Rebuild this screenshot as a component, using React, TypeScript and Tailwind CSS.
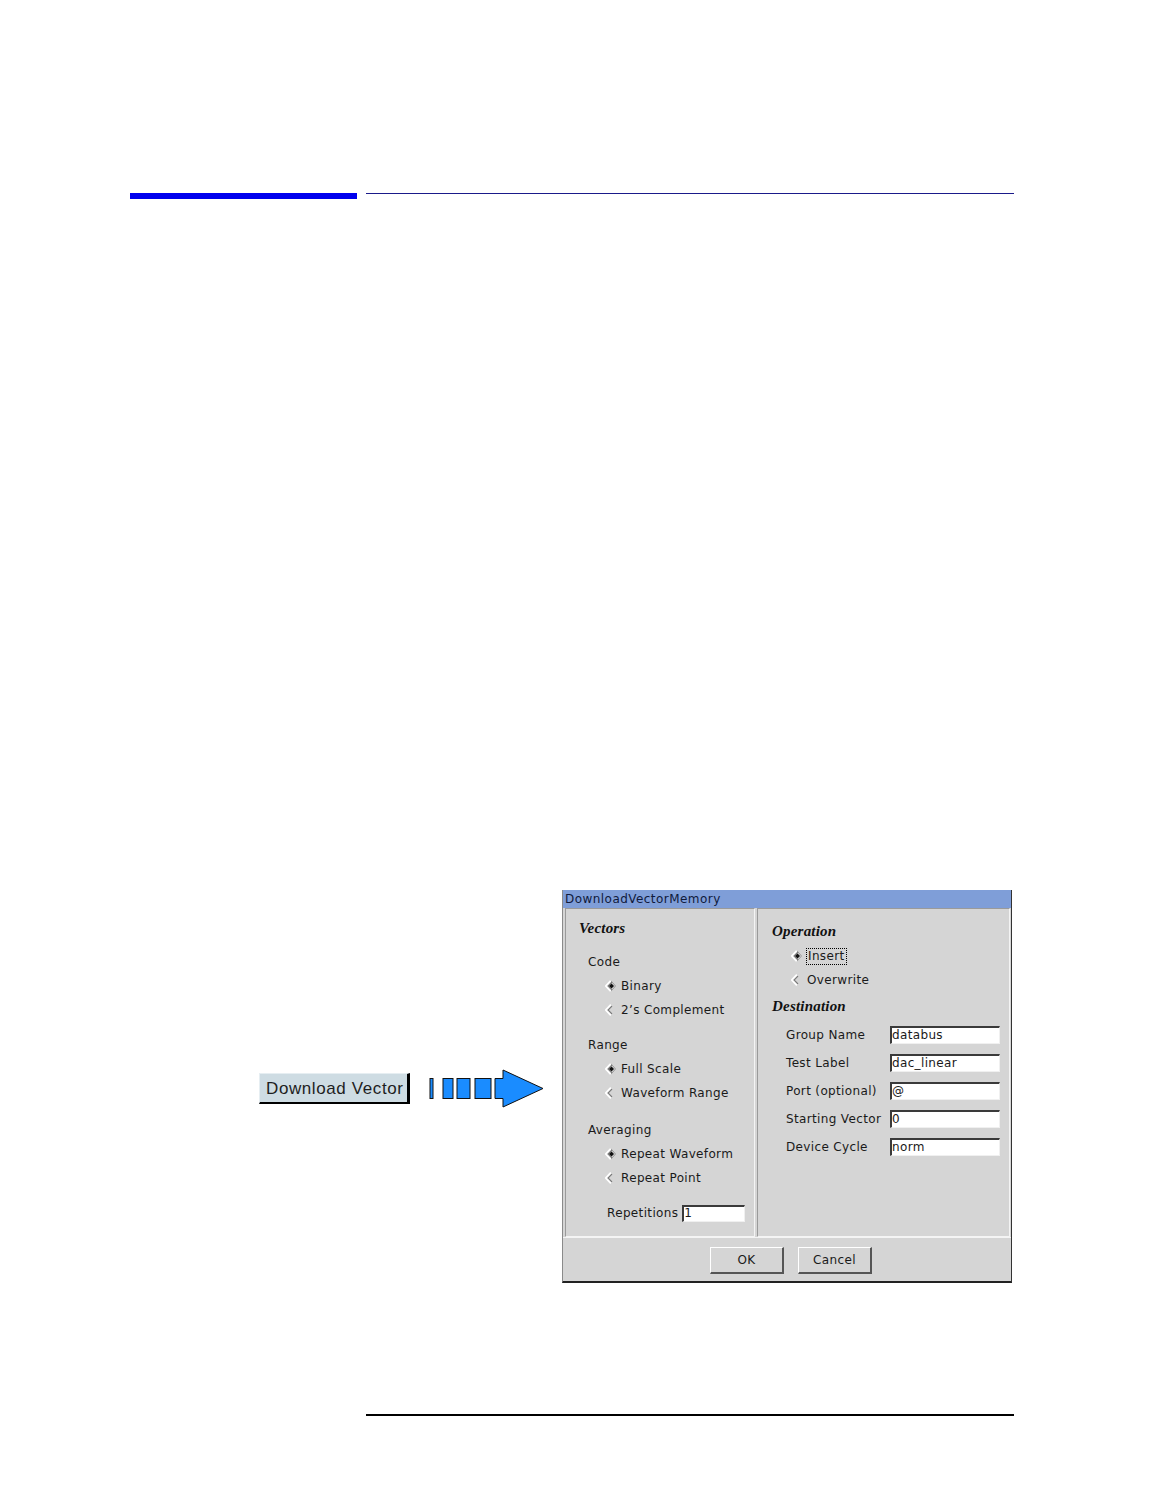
import React from 'react';

const ui = { fontFamily: '"DejaVu Sans", Verdana, sans-serif', letterSpacing: '0.35px' };
const serif = { fontFamily: '"Liberation Serif", "Times New Roman", serif', letterSpacing: '0.2px' };

const Radio = ({ on }: { on?: boolean }) => (
  <svg width="11" height="12" viewBox="0 0 11 12" className="shrink-0">
    <polyline points="6,0.8 1,6 6,11.2" fill="none" stroke="#ffffff" strokeWidth="2.2" />
    <polyline points="7,2 3,6 7,10" fill="none" stroke="#7a7a7a" strokeWidth="1.1" />
    {on && <polyline points="6,0.8 10.5,6 6,11.2" fill="none" stroke="#9a9a9a" strokeWidth="1" />}
    {on && <polygon points="6.5,3.5 9,6 6.5,8.5 4,6" fill="#111" />}
  </svg>
);

const Option = ({ label, on, focus }: { label: string; on?: boolean; focus?: boolean }) => (
  <div className="flex items-center h-[24px] gap-[5px]">
    <Radio on={on} />
    <span className={focus ? 'outline-1 outline-dotted outline-black px-[1px] leading-[15px]' : ''}>{label}</span>
  </div>
);

const Heading = ({ children }: { children: React.ReactNode }) => (
  <div className="h-[24px] leading-[24px] text-[15px] font-bold italic text-[#111]" style={serif}>
    {children}
  </div>
);

const Field = ({ label, value }: { label: string; value: string }) => (
  <div className="flex items-center h-[28px]">
    <span className="w-[104px] shrink-0">{label}</span>
    <div className="w-[110px] h-[18px] bg-white border-t-2 border-l-2 border-[#3a3a3a] leading-[15px] text-[12px] border-r border-b border-r-[#f0f0f0] border-b-[#f0f0f0]">
      {value}
    </div>
  </div>
);

const Button = ({ label }: { label: string }) => (
  <div className="w-[74px] h-[27px] flex items-center justify-center bg-[#d5d5d5] border-t border-l border-white border-r-2 border-b-2 border-r-[#555] border-b-[#555]">
    {label}
  </div>
);

export default function App() {
  return (
    <div className="w-[1164px] h-[1506px] bg-white relative overflow-hidden">
      {/* header rule */}
      <div className="flex items-start pt-[193px]">
        <div className="ml-[130px] w-[227px] h-[6px] bg-[#0000ee]" />
        <div className="ml-[9px] w-[648px] h-[1px] bg-[#1a1a8a]" />
      </div>

      {/* figure */}
      <div className="flex items-start mt-[691px] pl-[259px]">
        <div
          className="mt-[183px] w-[151px] h-[31px] bg-[#cedce3] border-r-[3px] border-b-[2px] border-black border-t border-l border-t-[#e6eef2] border-l-[#e6eef2] pl-[6px] text-[17px] leading-[29px] text-[#1e1e1e] tracking-[0.6px] whitespace-nowrap"
          style={{ fontFamily: '"Liberation Sans", Arial, sans-serif' }}
        >
          Download Vector
        </div>
        <svg width="115" height="40" viewBox="0 0 115 40" className="ml-[19px] mt-[179px]">
          <g fill="#1a8cff" stroke="#111" strokeWidth="1">
            <rect x="1" y="9.5" width="3" height="20" />
            <rect x="14" y="9.5" width="10" height="20" />
            <rect x="28" y="9.5" width="13" height="20" />
            <rect x="46" y="9.5" width="16" height="20" />
            <polygon points="66,9.5 74,9.5 74,1 114,19.5 74,38 74,29.5 66,29.5" />
          </g>
        </svg>

        {/* dialog */}
        <div
          className="ml-[18px] w-[450px] h-[393px] flex flex-col bg-[#d5d5d5] border-l border-[#8a8a8a] border-r border-r-[#333] border-b-2 border-b-[#222] text-[12px] text-[#1a1a1a]"
          style={ui}
        >
          <div className="h-[18px] bg-[#7f9ed8] text-[#101a3c] leading-[18px] pl-[2px] shrink-0 tracking-[0.45px]">DownloadVectorMemory</div>
          <div className="flex gap-[2px] pl-[2px] pr-[1px] h-[329px] shrink-0">
            {/* left panel */}
            <div className="w-[190px] border border-t-[#9a9a9a] border-l-[#9a9a9a] border-r-[#f4f4f4] border-b-[#f4f4f4] pl-[13px] pt-[7px]">
              <Heading>Vectors</Heading>
              <div className="pl-[9px] mt-[10px]">
                <div className="h-[24px] leading-[24px]">Code</div>
                <div className="pl-[17px]">
                  <Option label="Binary" on />
                  <Option label="2’s Complement" />
                </div>
                <div className="h-[24px] leading-[24px] mt-[11px]">Range</div>
                <div className="pl-[17px]">
                  <Option label="Full Scale" on />
                  <Option label="Waveform Range" />
                </div>
                <div className="h-[24px] leading-[24px] mt-[13px]">Averaging</div>
                <div className="pl-[17px]">
                  <Option label="Repeat Waveform" on />
                  <Option label="Repeat Point" />
                  <div className="flex items-center h-[24px] mt-[11px]">
                    <span className="pl-[2px]">Repetitions</span>
                    <div className="ml-[4px] w-[63px] h-[17px] bg-white border-t-2 border-l-2 border-[#3a3a3a] border-r border-b border-r-[#f0f0f0] border-b-[#f0f0f0] leading-[13px]">
                      1
                    </div>
                  </div>
                </div>
              </div>
            </div>
            {/* right panel */}
            <div className="w-[253px] border border-t-[#9a9a9a] border-l-[#9a9a9a] border-r-[#f4f4f4] border-b-[#f4f4f4] pl-[14px] pt-[10px]">
              <Heading>Operation</Heading>
              <div className="pl-[19px] mt-[1px]">
                <Option label="Insert" on focus />
                <Option label="Overwrite" />
              </div>
              <div className="mt-[2px]">
                <Heading>Destination</Heading>
              </div>
              <div className="pl-[14px] mt-[3px]">
                <Field label="Group Name" value="databus" />
                <Field label="Test Label" value="dac_linear" />
                <Field label="Port (optional)" value="@" />
                <Field label="Starting Vector" value="0" />
                <Field label="Device Cycle" value="norm" />
              </div>
            </div>
          </div>
          <div className="flex-1 flex items-start justify-center gap-[14px] pt-[9px] pl-[8px] border-t border-[#f4f4f4]">
            <Button label="OK" />
            <Button label="Cancel" />
          </div>
        </div>
      </div>

      {/* footer rule */}
      <div className="mt-[131px] ml-[366px] w-[648px] h-[2px] bg-black" />
    </div>
  );
}
